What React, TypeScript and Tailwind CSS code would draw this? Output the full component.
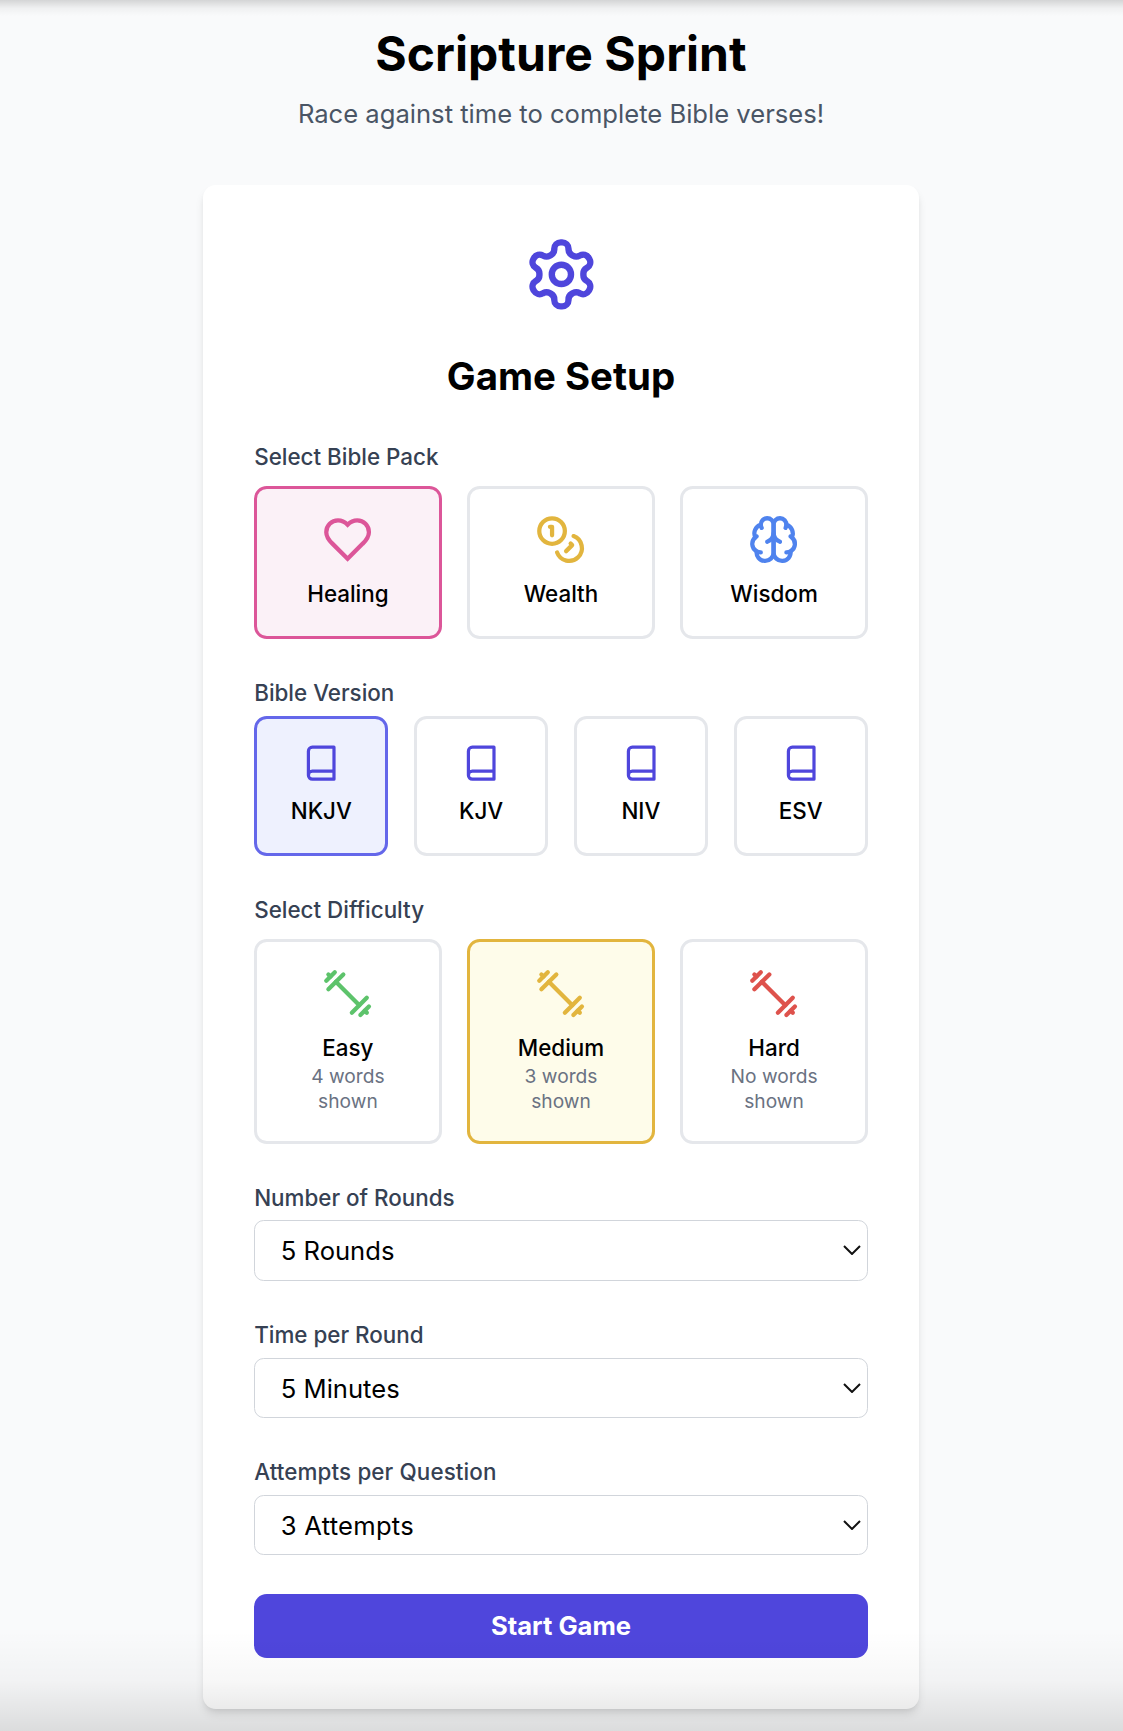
import { useState } from "react";
import type { ReactNode } from "react";

function Icon({ className, children }: { className: string; children: ReactNode }) {
  return (
    <svg
      viewBox="0 0 24 24"
      fill="none"
      stroke="currentColor"
      strokeWidth={2}
      strokeLinecap="round"
      strokeLinejoin="round"
      className={`block shrink-0 ${className}`}
    >
      {children}
    </svg>
  );
}

function SettingsIcon() {
  return (
    <Icon className="mx-auto size-[76.8px] text-[#4f46dc]">
      <path d="M12.22 2h-.44a2 2 0 0 0-2 2v.18a2 2 0 0 1-1 1.73l-.43.25a2 2 0 0 1-2 0l-.15-.08a2 2 0 0 0-2.73.73l-.22.38a2 2 0 0 0 .73 2.73l.15.1a2 2 0 0 1 1 1.72v.51a2 2 0 0 1-1 1.74l-.15.09a2 2 0 0 0-.73 2.73l.22.38a2 2 0 0 0 2.73.73l.15-.08a2 2 0 0 1 2 0l.43.25a2 2 0 0 1 1 1.73V20a2 2 0 0 0 2 2h.44a2 2 0 0 0 2-2v-.18a2 2 0 0 1 1-1.73l.43-.25a2 2 0 0 1 2 0l.15.08a2 2 0 0 0 2.73-.73l.22-.39a2 2 0 0 0-.73-2.73l-.15-.08a2 2 0 0 1-1-1.74v-.5a2 2 0 0 1 1-1.74l.15-.09a2 2 0 0 0 .73-2.73l-.22-.38a2 2 0 0 0-2.73-.73l-.15.08a2 2 0 0 1-2 0l-.43-.25a2 2 0 0 1-1-1.73V4a2 2 0 0 0-2-2z" />
      <circle cx="12" cy="12" r="3" />
    </Icon>
  );
}

function HeartIcon() {
  return (
    <Icon className="size-[51.2px] text-[#dc5699]">
      <path d="M19 14c1.49-1.46 3-3.21 3-5.5A5.5 5.5 0 0 0 16.5 3c-1.76 0-3 .5-4.5 2-1.5-1.5-2.74-2-4.5-2A5.5 5.5 0 0 0 2 8.5c0 2.3 1.5 4.05 3 5.5l7 7Z" strokeLinejoin="miter" />
    </Icon>
  );
}

function CoinsIcon() {
  return (
    <Icon className="size-[51.2px] text-[#e2b53e]">
      <circle cx="8" cy="8" r="6" />
      <path d="M18.09 10.37A6 6 0 1 1 10.34 18" />
      <path d="M7 6h1v4" />
      <path d="m16.71 13.88.7.71-2.82 2.82" />
    </Icon>
  );
}

function BrainIcon() {
  return (
    <Icon className="size-[51.2px] text-[#4f83ee]">
      <path d="M12 5a3 3 0 1 0-5.997.125 4 4 0 0 0-2.526 5.77 4 4 0 0 0 .556 6.588A4 4 0 1 0 12 18Z" />
      <path d="M12 5a3 3 0 1 1 5.997.125 4 4 0 0 1 2.526 5.77 4 4 0 0 1-.556 6.588A4 4 0 1 1 12 18Z" />
      <path d="M15 13a4.5 4.5 0 0 1-3-4 4.5 4.5 0 0 1-3 4" />
      <path d="M17.599 6.5a3 3 0 0 0 .399-1.375" />
      <path d="M6.003 5.125A3 3 0 0 0 6.401 6.5" />
      <path d="M3.477 10.896a4 4 0 0 1 .585-.396" />
      <path d="M19.938 10.5a4 4 0 0 1 .585.396" />
      <path d="M6 18a4 4 0 0 1-1.967-.516" />
      <path d="M19.967 17.484A4 4 0 0 1 18 18" />
    </Icon>
  );
}

function BookIcon() {
  return (
    <Icon className="size-[38.4px] text-[#4f46dc]">
      <path d="M4 19.5v-15A2.5 2.5 0 0 1 6.5 2H20v20H6.5a2.5 2.5 0 0 1 0-5H20" />
    </Icon>
  );
}

function DumbbellIcon({ color }: { color: string }) {
  return (
    <Icon className={`mt-px size-[51.2px] ${color}`}>
      <path d="m6.5 6.5 11 11" />
      <path d="m21 21-1-1" />
      <path d="m3 3 1 1" />
      <path d="m18 22 4-4" />
      <path d="m2 6 4-4" />
      <path d="m3 10 7-7" />
      <path d="m14 21 7-7" />
    </Icon>
  );
}

const packs = [
  { name: "Healing", icon: <HeartIcon /> },
  { name: "Wealth", icon: <CoinsIcon /> },
  { name: "Wisdom", icon: <BrainIcon /> },
];

const versions = ["NKJV", "KJV", "NIV", "ESV"];

const difficulties = [
  { name: "Easy", words: "4 words", color: "text-[#5dc36b]" },
  { name: "Medium", words: "3 words", color: "text-[#e2b53e]" },
  { name: "Hard", words: "No words", color: "text-[#de524c]" },
];

function Label({ className = "", children }: { className?: string; children: ReactNode }) {
  return (
    <div className={`text-[22.4px] leading-[32px] font-medium text-gray-700 ${className}`}>{children}</div>
  );
}

function Option({
  selected,
  selectedClass,
  height,
  onClick,
  children,
}: {
  selected: boolean;
  selectedClass: string;
  height: string;
  onClick: () => void;
  children: ReactNode;
}) {
  return (
    <button
      type="button"
      onClick={onClick}
      className={`flex flex-col items-center rounded-[12.8px] border-[3px] pt-[25px] ${height} ${
        selected ? selectedClass : "border-[#e5e7eb] bg-white"
      }`}
    >
      {children}
    </button>
  );
}

function OptionName({ children }: { children: ReactNode }) {
  return <span className="mt-[12.8px] text-[22.4px] leading-[32px] font-medium text-black">{children}</span>;
}

function SelectField({
  label,
  options,
  labelClass = "",
  selectClass = "",
}: {
  label: string;
  options: string[];
  labelClass?: string;
  selectClass?: string;
}) {
  return (
    <div className="flex flex-col gap-[6.4px]">
      <Label className={labelClass}>{label}</Label>
      <div className="relative">
        <select
          aria-label={label}
          className={`block h-[60.5px] w-full appearance-none rounded-[9.6px] border border-[#d1d5db] bg-white pt-[2px] pr-12 pl-[25.6px] text-[25.6px] text-black ${selectClass}`}
        >
          {options.map((o) => (
            <option key={o}>{o}</option>
          ))}
        </select>
        <svg
          viewBox="0 0 18 10"
          fill="none"
          stroke="#111"
          strokeWidth={2}
          className="pointer-events-none absolute top-[25px] right-[7px] h-[10px] w-[18px]"
        >
          <path d="M1 1l8 8 8-8" />
        </svg>
      </div>
    </div>
  );
}

export default function App() {
  const [pack, setPack] = useState("Healing");
  const [version, setVersion] = useState("NKJV");
  const [difficulty, setDifficulty] = useState("Medium");

  return (
    <div className="relative h-[1731px] overflow-hidden bg-[#f9fafb] pt-[25px] pr-px font-['Inter',sans-serif]">
      <header className="text-center">
        <h1 className="text-[48px] leading-[57.6px] font-bold tracking-[0.04px] text-black">Scripture Sprint</h1>
        <p className="mt-[12.8px] text-[25.6px] leading-[38.4px] text-gray-600">
          Race against time to complete Bible verses!
        </p>
      </header>

      <main className="mx-auto mt-[51.2px] w-[716px] rounded-[12.8px] bg-white p-[51.2px] shadow-[0_6.4px_9.6px_-1.6px_rgba(0,0,0,0.1),0_3.2px_6.4px_-3.2px_rgba(0,0,0,0.1)]">
        <SettingsIcon />
        <h2 className="mt-[38.4px] text-center text-[38.4px] leading-[51.2px] font-bold text-black">Game Setup</h2>

        <div className="mt-[38.4px] flex flex-col gap-[38.4px]">
          <section className="flex flex-col gap-[12.8px]">
            <Label>Select Bible Pack</Label>
            <div className="grid grid-cols-3 gap-[25.6px]">
              {packs.map((p) => (
                <Option
                  key={p.name}
                  height="h-[153px]"
                  selected={pack === p.name}
                  selectedClass="border-[#dc5699] bg-[#fbf1f7]"
                  onClick={() => setPack(p.name)}
                >
                  {p.icon}
                  <OptionName>{p.name}</OptionName>
                </Option>
              ))}
            </div>
          </section>

          <section className="flex flex-col gap-[6.4px]">
            <Label>Bible Version</Label>
            <div className="grid grid-cols-4 gap-[25.6px]">
              {versions.map((v) => (
                <Option
                  key={v}
                  height="h-[140px]"
                  selected={version === v}
                  selectedClass="border-[#6467ea] bg-[#eef1fe]"
                  onClick={() => setVersion(v)}
                >
                  <BookIcon />
                  <OptionName>{v}</OptionName>
                </Option>
              ))}
            </div>
          </section>

          <section className="flex flex-col gap-[12.8px]">
            <Label>Select Difficulty</Label>
            <div className="grid grid-cols-3 gap-[25.6px]">
              {difficulties.map((d) => (
                <Option
                  key={d.name}
                  height="h-[204.8px]"
                  selected={difficulty === d.name}
                  selectedClass="border-[#e2b53e] bg-[#fefcea]"
                  onClick={() => setDifficulty(d.name)}
                >
                  <DumbbellIcon color={d.color} />
                  <OptionName>{d.name}</OptionName>
                  <span className="text-[19.2px] leading-[25.2px] text-gray-500">
                    {d.words}
                    <br />
                    shown
                  </span>
                </Option>
              ))}
            </div>
          </section>

          <SelectField label="Number of Rounds" options={["5 Rounds", "10 Rounds", "15 Rounds"]} />
          <SelectField label="Time per Round" options={["5 Minutes", "10 Minutes"]} />
          <SelectField
            label="Attempts per Question"
            options={["3 Attempts", "5 Attempts"]}
            labelClass="tracking-[0.12px]"
            selectClass="tracking-[0.25px]"
          />

          <button
            type="button"
            className="h-[64px] w-full rounded-[12.8px] bg-[#4f46dc] text-[25.6px] leading-[38.4px] font-bold text-white"
          >
            Start Game
          </button>
        </div>
      </main>

      <div className="pointer-events-none absolute inset-x-0 top-0 h-[16px] bg-linear-to-b from-black/15 via-black/4 to-transparent" />
      <div className="pointer-events-none absolute inset-x-0 bottom-0 h-[100px] bg-linear-to-b from-transparent via-black/3 to-black/12" />
    </div>
  );
}
